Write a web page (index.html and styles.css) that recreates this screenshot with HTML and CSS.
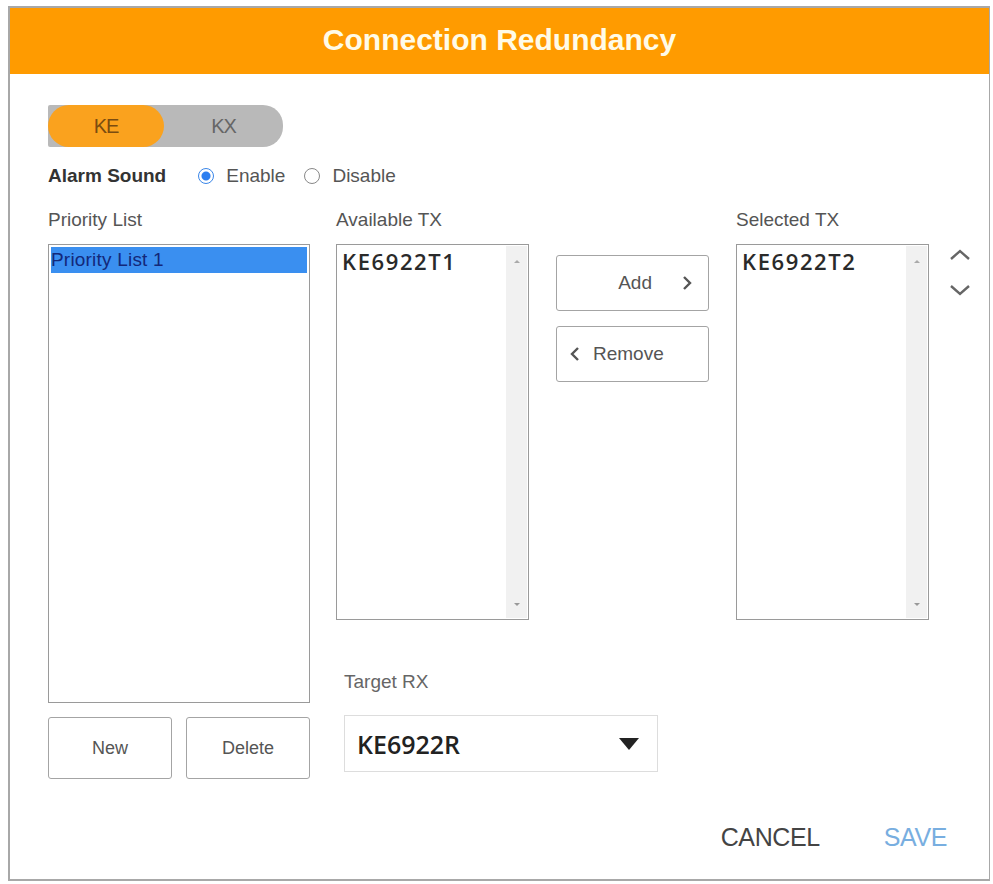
FILE: index.html
```html
<!DOCTYPE html>
<html lang="en">
<head>
    <meta charset="UTF-8">
    <title>Connection Redundancy</title>
    <link rel="stylesheet" href="styles.css">
</head>
<body>
    <div class="dialog">
        <div class="dialog-header">Connection Redundancy</div>

        <div class="dialog-body">
            <div class="switch">
                <span class="switch-opt active">KE</span>
                <span class="switch-opt">KX</span>
            </div>

            <div class="alarm-row">
                <span class="alarm-label">Alarm Sound</span>
                <label class="radio"><span class="radio-dot checked"></span>Enable</label>
                <label class="radio"><span class="radio-dot"></span>Disable</label>
            </div>

            <div class="main">
                <!-- left: priority lists -->
                <div class="priority-col">
                    <div class="field-label">Priority List</div>
                    <div class="listbox priority-box">
                        <div class="list-item selected">Priority List 1</div>
                    </div>
                    <div class="btn-pair">
                        <button class="btn">New</button>
                        <button class="btn">Delete</button>
                    </div>
                </div>

                <!-- right: tx lists and target -->
                <div class="tx-area">
                    <div class="tx-grid">
                        <div class="field-label">Available TX</div>
                        <div></div>
                        <div class="field-label">Selected TX</div>
                        <div></div>

                        <div class="listbox tx-box">
                            <div class="tx-item">KE6922T1</div>
                            <div class="scrollbar"><span class="sb-up"></span><span class="sb-down"></span></div>
                        </div>

                        <div class="move-btns">
                            <button class="btn move-btn add-btn">Add
                                <svg class="chev" width="10" height="18" viewBox="0 0 10 18"><path d="M2 3 L8 9 L2 15" fill="none" stroke="#555" stroke-width="2.4"/></svg>
                            </button>
                            <button class="btn move-btn remove-btn">
                                <svg class="chev" width="10" height="18" viewBox="0 0 10 18"><path d="M8 3 L2 9 L8 15" fill="none" stroke="#555" stroke-width="2.4"/></svg>
                                Remove
                            </button>
                        </div>

                        <div class="listbox tx-box">
                            <div class="tx-item">KE6922T2</div>
                            <div class="scrollbar"><span class="sb-up"></span><span class="sb-down"></span></div>
                        </div>

                        <div class="order-btns">
                            <svg width="24" height="16" viewBox="0 0 24 16"><path d="M3 12 L12 4 L21 12" fill="none" stroke="#666" stroke-width="2.4"/></svg>
                            <svg width="24" height="16" viewBox="0 0 24 16"><path d="M3 4 L12 12 L21 4" fill="none" stroke="#666" stroke-width="2.4"/></svg>
                        </div>
                    </div>

                    <div class="target">
                        <div class="field-label target-label">Target RX</div>
                        <div class="select">
                            <span>KE6922R</span>
                            <span class="caret"></span>
                        </div>
                    </div>
                </div>
            </div>
        </div>

        <div class="dialog-footer">
            <button class="text-btn cancel">CANCEL</button>
            <button class="text-btn save">SAVE</button>
        </div>
    </div>
</body>
</html>
```

FILE: styles.css
```css
* {
    box-sizing: border-box;
}

body {
    margin: 0;
    background: #fff;
    font-family: "Liberation Sans", Arial, sans-serif;
    color: #444;
}

.dialog {
    margin: 6px 0 0 8px;
    width: 982px;
    height: 875px;
    border: 2px solid #a8a8a8;
    border-right-width: 1px;
    display: flex;
    flex-direction: column;
}

.dialog-header {
    height: 66px;
    background: #ff9b00;
    color: #fffbe8;
    font-size: 30px;
    font-weight: bold;
    display: flex;
    align-items: center;
    justify-content: center;
    padding-bottom: 2px;
}

.dialog-body {
    flex: 1;
    padding: 31px 0 0 38px;
}

.switch {
    display: flex;
    width: 235px;
    height: 42px;
    background: #b9b9b9;
    border-radius: 2px 20px 20px 2px;
}

.switch-opt {
    width: 116px;
    display: flex;
    align-items: center;
    justify-content: center;
    font-size: 20px;
    color: #666;
    letter-spacing: -1px;
}

.switch-opt.active {
    background: #faa21e;
    border-radius: 21px;
    color: #7a4c10;
}

.switch-opt + .switch-opt {
    flex: 1;
}

.alarm-row {
    margin-top: 17px;
    height: 24px;
    display: flex;
    align-items: center;
    font-size: 19px;
}

.alarm-label {
    font-weight: bold;
    color: #333;
    margin-right: 32px;
}

.radio {
    display: flex;
    align-items: center;
    color: #555;
    margin-right: 19px;
}

.radio-dot {
    width: 16px;
    height: 16px;
    border-radius: 50%;
    border: 1px solid #888;
    margin-right: 12px;
    background: #fff;
}

.radio-dot.checked {
    border-color: #3a86e8;
    background: radial-gradient(circle, #2d7ff0 0 4px, #fff 5px);
}

.main {
    margin-top: 20px;
    display: flex;
    gap: 26px;
}

.field-label {
    font-size: 19px;
    line-height: 24px;
    color: #555;
}

.priority-col {
    width: 262px;
}

.listbox {
    border: 1px solid #9a9a9a;
    background: #fff;
    margin-top: 12px;
}

.priority-box {
    height: 459px;
    padding: 2px;
}

.list-item {
    height: 26px;
    line-height: 26px;
    font-size: 19px;
    padding-left: 0;
}

.list-item.selected {
    background: #3a8ff0;
    color: #13287a;
    letter-spacing: 0.2px;
}

.btn-pair {
    margin-top: 14px;
    display: flex;
    gap: 14px;
}

.btn {
    font-family: inherit;
    background: #fff;
    border: 1px solid #a4a4a4;
    border-radius: 3px;
    color: #555;
    cursor: pointer;
}

.btn-pair .btn {
    width: 124px;
    height: 62px;
    font-size: 18px;
}

.tx-grid {
    display: grid;
    grid-template-columns: 193px 153px 193px 40px;
    column-gap: 27px;
}

.tx-box {
    height: 376px;
    display: flex;
    justify-content: space-between;
}

.tx-item {
    font-family: "Open Sans", sans-serif;
    font-weight: 600;
    font-size: 22px;
    letter-spacing: 1.6px;
    color: #2a2a2a;
    padding: 1px 0 0 5px;
    line-height: 30px;
}

.scrollbar {
    width: 21px;
    margin: 1px 1px 1px 0;
    background: #f1f1f1;
    display: flex;
    flex-direction: column;
    justify-content: space-between;
    align-items: center;
    padding: 14px 0 12px;
}

.sb-up,
.sb-down {
    width: 0;
    height: 0;
    border-left: 3px solid transparent;
    border-right: 3px solid transparent;
}

.sb-up {
    border-bottom: 3px solid #aaa;
}

.sb-down {
    border-top: 3px solid #999;
}

.move-btns {
    padding-top: 23px;
    display: flex;
    flex-direction: column;
    gap: 15px;
}

.move-btn {
    height: 56px;
    font-size: 19px;
    display: flex;
    align-items: center;
}

.add-btn {
    justify-content: flex-end;
    gap: 30px;
    padding-right: 16px;
}

.remove-btn {
    gap: 13px;
    padding-left: 13px;
}

.order-btns {
    display: flex;
    flex-direction: column;
    gap: 19px;
    padding-top: 15px;
    margin-left: -8px;
}

.target {
    margin-left: 8px;
}

.target-label {
    margin-top: 50px;
    font-size: 19px;
    color: #666;
}

.select {
    margin-top: 21px;
    width: 314px;
    height: 57px;
    border: 1px solid #ddd;
    display: flex;
    align-items: center;
    justify-content: space-between;
    padding: 0 18px 0 12px;
    font-family: "Open Sans", sans-serif;
    font-weight: 600;
    font-size: 25px;
    color: #222;
}

.caret {
    width: 0;
    height: 0;
    border-left: 10px solid transparent;
    border-right: 10px solid transparent;
    border-top: 12px solid #222;
}

.dialog-footer {
    display: flex;
    justify-content: flex-end;
    gap: 64px;
    padding: 0 42px 27px 0;
}

.text-btn {
    font-family: inherit;
    font-size: 25px;
    background: none;
    border: none;
    padding: 0;
    cursor: pointer;
    letter-spacing: -0.4px;
}

.cancel {
    color: #444;
}

.save {
    color: #78aee0;
}
```
